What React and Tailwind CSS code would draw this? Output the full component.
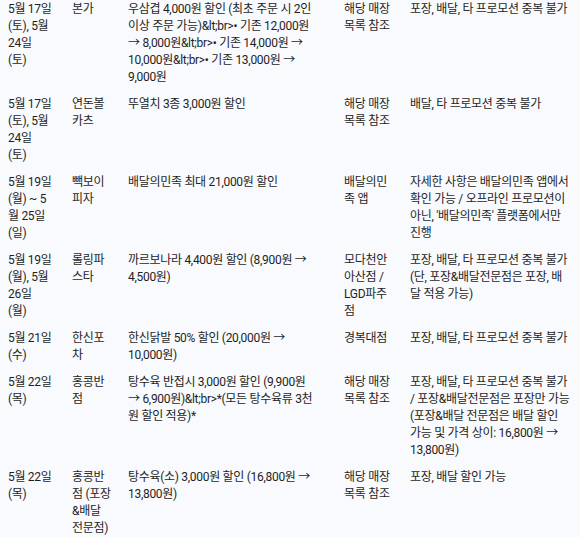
import React from "react";

const rows = [
  {
    c: [
      ["5월 17일", "(토), 5월", "24일", "(토)"],
      ["본가"],
      [
        "우삼겹 4,000원 할인 (최초 주문 시 2인",
        "이상 주문 가능)&lt;br>• 기존 12,000원",
        "→ 8,000원&lt;br>• 기존 14,000원 →",
        "10,000원&lt;br>• 기존 13,000원 →",
        "9,000원",
      ],
      ["해당 매장", "목록 참조"],
      ["포장, 배달, 타 프로모션 중복 불가"],
    ],
  },
  {
    c: [
      ["5월 17일", "(토), 5월", "24일", "(토)"],
      ["연돈볼", "카츠"],
      ["뚜열치 3종 3,000원 할인"],
      ["해당 매장", "목록 참조"],
      ["배달, 타 프로모션 중복 불가"],
    ],
  },
  {
    c: [
      ["5월 19일", "(월) ~ 5", "월 25일", "(일)"],
      ["빽보이", "피자"],
      ["배달의민족 최대 21,000원 할인"],
      ["배달의민", "족 앱"],
      [
        "자세한 사항은 배달의민족 앱에서",
        "확인 가능 / 오프라인 프로모션이",
        "아닌, '배달의민족' 플랫폼에서만",
        "진행",
      ],
    ],
  },
  {
    c: [
      ["5월 19일", "(월), 5월", "26일", "(월)"],
      ["롤링파", "스타"],
      ["까르보나라 4,400원 할인 (8,900원 →", "4,500원)"],
      ["모다천안", "아산점 /", "LGD파주", "점"],
      [
        "포장, 배달, 타 프로모션 중복 불가",
        "(단, 포장&배달전문점은 포장, 배",
        "달 적용 가능)",
      ],
    ],
  },
  {
    c: [
      ["5월 21일", "(수)"],
      ["한신포", "차"],
      ["한신닭발 50% 할인 (20,000원 →", "10,000원)"],
      ["경복대점"],
      ["포장, 배달, 타 프로모션 중복 불가"],
    ],
  },
  {
    c: [
      ["5월 22일", "(목)"],
      ["홍콩반", "점"],
      [
        "탕수육 반접시 3,000원 할인 (9,900원",
        "→ 6,900원)&lt;br>*(모든 탕수육류 3천",
        "원 할인 적용)*",
      ],
      ["해당 매장", "목록 참조"],
      [
        "포장, 배달, 타 프로모션 중복 불가",
        "/ 포장&배달전문점은 포장만 가능",
        "(포장&배달 전문점은 배달 할인",
        "가능 및 가격 상이: 16,800원 →",
        "13,800원)",
      ],
    ],
  },
  {
    c: [
      ["5월 22일", "(목)"],
      ["홍콩반", "점 (포장", "&배달", "전문점)"],
      ["탕수육(소) 3,000원 할인 (16,800원 →", "13,800원)"],
      ["해당 매장", "목록 참조"],
      ["포장, 배달 할인 가능"],
    ],
  },
];

export default function App() {
  return (
    <div
      className="w-[580px] h-[537px] overflow-hidden bg-[#f8fafd] text-[#1f1f1f]"
      style={{ fontFamily: 'Roboto, "Noto Sans CJK KR", sans-serif' }}
    >
      <table className="table-fixed border-collapse w-[580px] mt-[1px] text-[12px] leading-[17px] tracking-[-0.3px]">
        <colgroup>
          <col className="w-[64px]" />
          <col className="w-[56px]" />
          <col className="w-[216px]" />
          <col className="w-[66px]" />
          <col className="w-[178px]" />
        </colgroup>
        <tbody>
          {rows.map((r, i) => (
            <tr key={i}>
              {r.c.map((lines, j) => (
                <td key={j} className="align-top px-2 pt-0 pb-[10px]">
                  {lines.map((l, k) => (
                    <div key={k} className="whitespace-nowrap">
                      {l}
                    </div>
                  ))}
                </td>
              ))}
            </tr>
          ))}
        </tbody>
      </table>
    </div>
  );
}
